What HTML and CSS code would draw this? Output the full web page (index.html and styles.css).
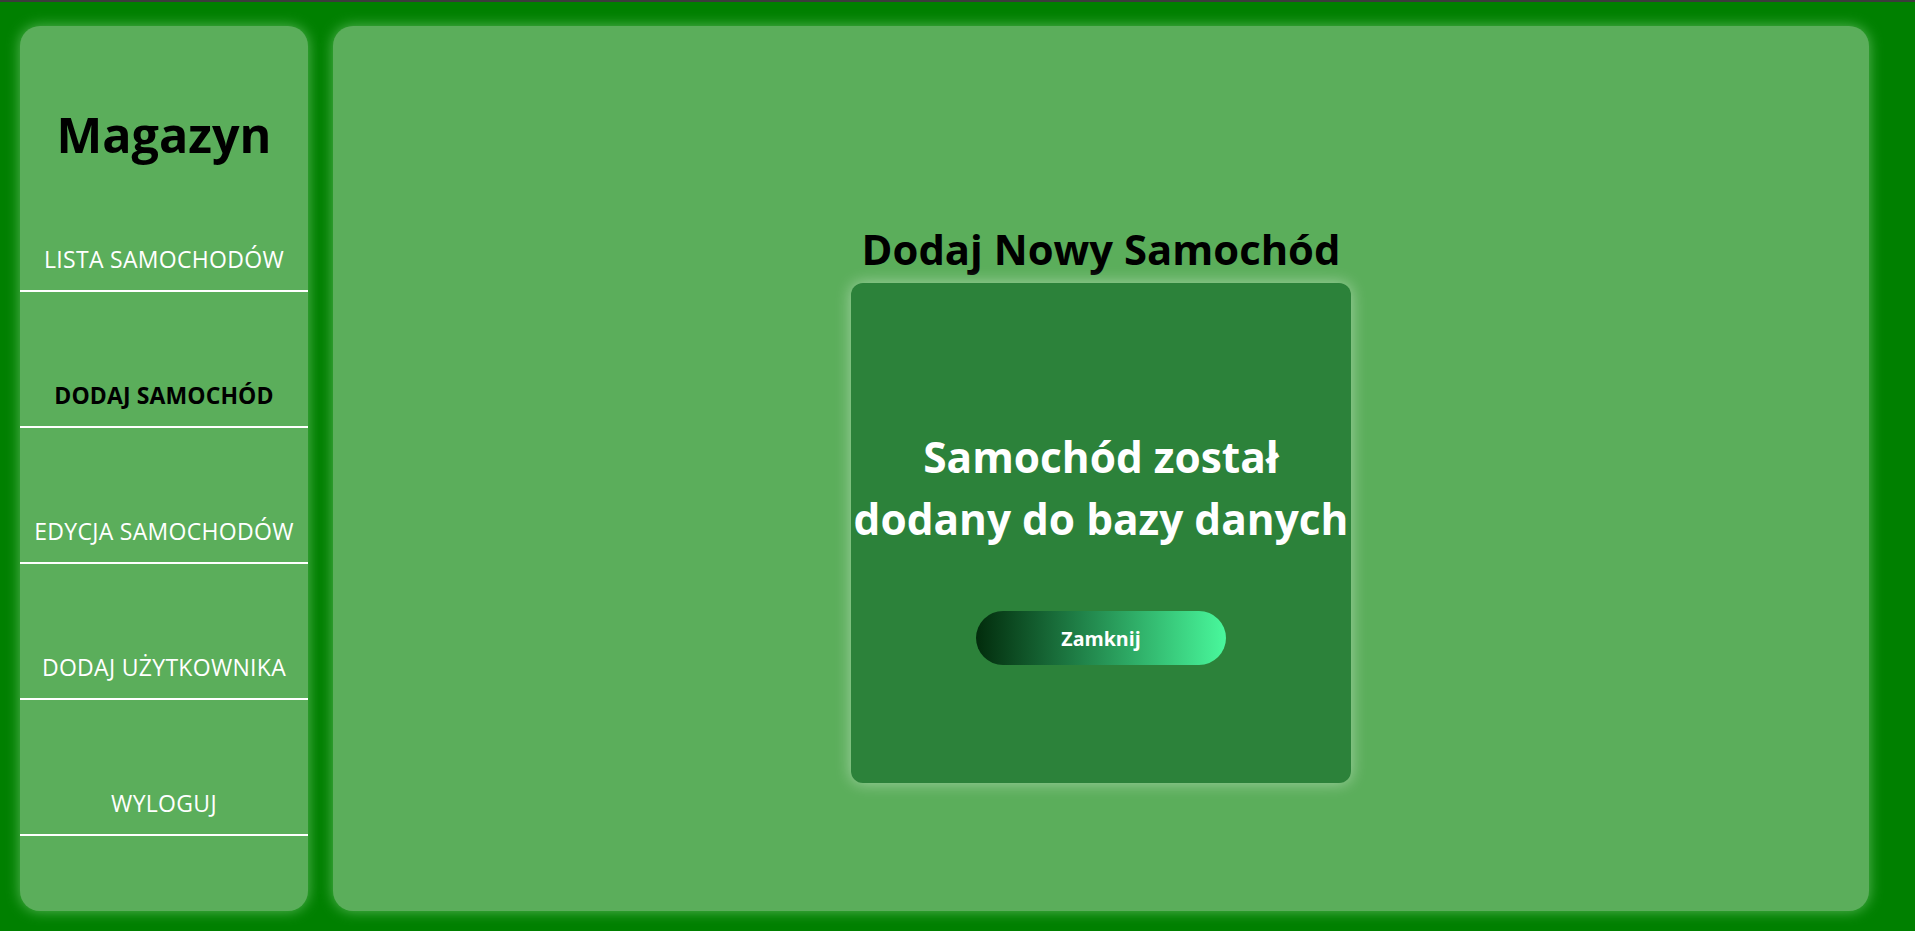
FILE: index.html
```html
<!DOCTYPE html>
<html lang="pl">
<head>
<meta charset="utf-8">
<title>Magazyn</title>
<link rel="stylesheet" href="styles.css">
</head>
<body>
<div class="topline"></div>
<div class="app">
  <aside class="sidebar">
    <h1 class="brand">Magazyn</h1>
    <nav class="nav">
      <a class="nav-item" href="#">LISTA SAMOCHODÓW</a>
      <a class="nav-item active" href="#">DODAJ SAMOCHÓD</a>
      <a class="nav-item" href="#">EDYCJA SAMOCHODÓW</a>
      <a class="nav-item" href="#">DODAJ UŻYTKOWNIKA</a>
      <a class="nav-item" href="#">WYLOGUJ</a>
    </nav>
  </aside>
  <main class="main">
    <h2 class="title">Dodaj Nowy Samochód</h2>
    <div class="card">
      <p class="message">Samochód został<br>dodany do bazy danych</p>
      <button class="close-btn" type="button">Zamknij</button>
    </div>
  </main>
</div>
</body>
</html>
```
FILE: styles.css
```css
* { box-sizing: border-box; }
html, body { margin: 0; padding: 0; }
body {
  background: #008000;
  font-family: "Open Sans", "DejaVu Sans", sans-serif;
  height: 931px;
  overflow: hidden;
}
.topline {
  height: 2px;
  background: #3c3c3c;
}
.app {
  display: flex;
  gap: 25px;
  padding: 24px 46px 20px 20px;
  height: 929px;
}
.sidebar {
  width: 288px;
  flex: none;
  background: #5bae5b;
  border-radius: 20px;
  box-shadow: 0 0 14px rgba(120, 200, 120, 0.75);
  padding-top: 88px;
  display: flex;
  flex-direction: column;
}
.brand {
  margin: 0 0 2px;
  font-size: 48.5px;
  line-height: 40px;
  font-weight: 700;
  color: #000;
  text-align: center;
}
.nav {
  display: flex;
  flex-direction: column;
}
.nav-item {
  display: block;
  height: 136px;
  padding: 87px 0 14px;
  line-height: 33px;
  font-size: 23px;
  letter-spacing: 0.3px;
  color: #fff;
  text-decoration: none;
  text-align: center;
  border-bottom: 2px solid #fff;
  white-space: nowrap;
}
.nav-item.active {
  color: #000;
  font-weight: 700;
  letter-spacing: 0.1px;
}
.main {
  flex: 1;
  background: #5bae5b;
  border-radius: 20px;
  box-shadow: 0 0 14px rgba(120, 200, 120, 0.75);
  padding-top: 192px;
  display: flex;
  flex-direction: column;
  align-items: center;
}
.title {
  margin: 0 0 3px;
  font-size: 41.8px;
  line-height: 62px;
  font-weight: 700;
  color: #000;
  white-space: nowrap;
}
.card {
  width: 500px;
  height: 500px;
  background: #2c823a;
  border-radius: 12px;
  box-shadow: 0 0 16px rgba(255, 255, 255, 0.45);
  padding-top: 143px;
  display: flex;
  flex-direction: column;
  align-items: center;
}
.message {
  margin: 0;
  color: #fff;
  font-size: 42.4px;
  line-height: 62px;
  font-weight: 700;
  text-align: center;
  white-space: nowrap;
}
.close-btn {
  margin-top: 61px;
  width: 250px;
  height: 54px;
  border: none;
  border-radius: 27px;
  background: linear-gradient(to right, #022c0c, #49f89c);
  color: #fff;
  font-family: "Open Sans", "DejaVu Sans", sans-serif;
  font-size: 19.6px;
  font-weight: 700;
  cursor: pointer;
}
```
